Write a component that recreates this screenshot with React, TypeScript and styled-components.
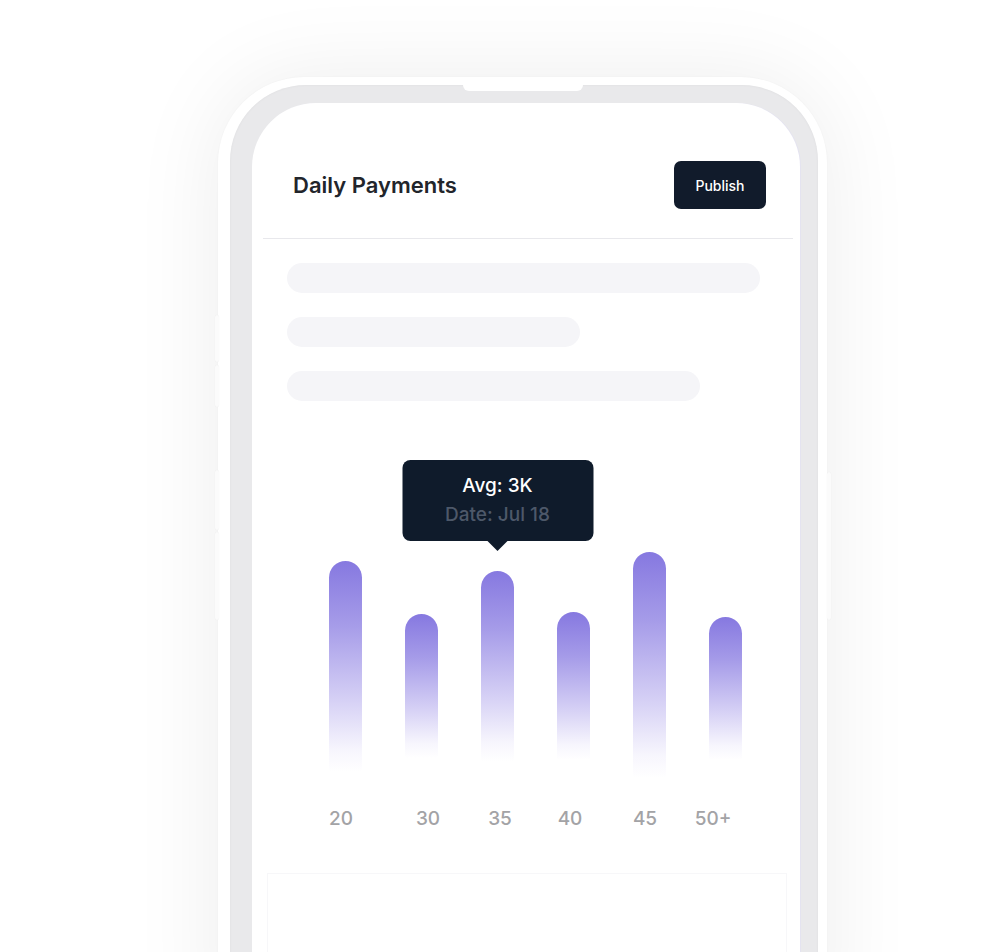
import React from "react";
import styled, { createGlobalStyle } from "styled-components";

const Global = createGlobalStyle`
  html, body { margin: 0; padding: 0; background: #ffffff; }
  body { font-family: Inter, "Noto Sans", "Liberation Sans", sans-serif; }
  * { box-sizing: border-box; }
`;

const Page = styled.div`
  width: 995px;
  height: 952px;
  overflow: hidden;
  background: #ffffff;
  padding: 77px 0 0 218px;
`;

const PhoneFrame = styled.div`
  position: relative;
  width: 609px;
  height: 1000px;
  background: #ffffff;
  border-radius: 86px;
  padding: 8px 9px 0 12px;
  box-shadow: 0 0 90px rgba(0, 0, 0, 0.075), 0 0 2px rgba(0, 0, 0, 0.04);
`;

const SideButton = styled.div<{ $top: number; $h: number; $side: "left" | "right" }>`
  position: absolute;
  top: ${(p) => p.$top}px;
  height: ${(p) => p.$h}px;
  width: 4px;
  ${(p) => (p.$side === "left" ? "left: -3px;" : "right: -4px;")}
  background: #fbfbfb;
  border-radius: 2px;
  box-shadow: 0 0 1px rgba(0, 0, 0, 0.08);
`;

const Bezel = styled.div`
  position: relative;
  height: 100%;
  background: #e9e9eb;
  border-radius: 76px;
  padding: 18px 18px 0 22px;
  box-shadow: inset 0 0 3px rgba(0, 0, 0, 0.05);
`;

const Notch = styled.div`
  position: absolute;
  top: 0;
  left: 233px;
  width: 120px;
  height: 6px;
  background: #ffffff;
  border-radius: 0 0 6px 6px;
`;

const Screen = styled.div`
  height: 100%;
  background: #ffffff;
  border-radius: 64px 64px 0 0;
  overflow: hidden;
  box-shadow: 1px 0 0 #e4e3f0;
`;

const Content = styled.div`
  margin: 0 7px 0 11px;
`;

const Header = styled.div`
  display: flex;
  align-items: center;
  justify-content: space-between;
  padding: 58px 27px 29px 30px;
  border-bottom: 1px solid #e8e8ec;
`;

const Title = styled.h1`
  margin: 0;
  font-size: 22px;
  font-weight: 600;
  color: #22252b;
`;

const PublishButton = styled.button`
  width: 92px;
  height: 48px;
  border: none;
  border-radius: 7px;
  background: #111b2b;
  color: #ffffff;
  font-family: inherit;
  font-size: 14px;
  font-weight: 500;
`;

const Skeletons = styled.div`
  display: flex;
  flex-direction: column;
  gap: 24px;
  padding: 24px 0 0 24px;
`;

const SkeletonBar = styled.div<{ $w: number }>`
  width: ${(p) => p.$w}px;
  height: 30px;
  border-radius: 15px;
  background: #f5f5f8;
`;

const Bars = styled.div`
  display: flex;
  align-items: flex-start;
  gap: 43px;
  height: 226px;
  margin: 151px 0 0 66px;
`;

const BarSlot = styled.div`
  position: relative;
  width: 33px;
  height: 100%;
`;

const Bar = styled.div<{ $top: number; $h: number }>`
  margin-top: ${(p) => p.$top}px;
  width: 33px;
  height: ${(p) => p.$h}px;
  border-radius: 17px 17px 0 0;
  background: linear-gradient(
    180deg,
    rgba(130, 116, 223, 0.97) 0%,
    rgba(140, 127, 226, 0.78) 30%,
    rgba(160, 148, 232, 0.45) 65%,
    rgba(190, 180, 240, 0.12) 90%,
    rgba(255, 255, 255, 0) 100%
  );
`;

const Tooltip = styled.div`
  position: absolute;
  left: 50%;
  bottom: calc(100% + 11px);
  transform: translateX(-50%);
  width: 191px;
  padding: 11px 0 12px;
  background: #0f1b2b;
  border-radius: 8px;
  text-align: center;
  font-size: 19px;
  line-height: 29px;
  font-weight: 500;
  &::after {
    content: "";
    position: absolute;
    left: 50%;
    top: 100%;
    transform: translateX(-50%);
    border-left: 10px solid transparent;
    border-right: 10px solid transparent;
    border-top: 10px solid #0f1b2b;
  }
`;

const TipValue = styled.div`
  color: #ffffff;
`;

const TipDate = styled.div`
  color: #4d5869;
`;

const Labels = styled.div`
  display: grid;
  grid-template-columns: 87px 72px 70px 75px 68px 60px;
  justify-items: start;
  margin-top: 29px;
  padding-left: 48px;
`;

const Label = styled.span`
  width: 60px;
  text-align: center;
  font-size: 19px;
  line-height: 24px;
  font-weight: 500;
  color: #a3a3a6;
`;

const BottomCard = styled.div`
  margin: 42px 6px 0 4px;
  height: 120px;
  border: 1px solid #f7f7f9;
  border-bottom: none;
`;

const bars = [
  { top: 9, h: 211 },
  { top: 62, h: 144 },
  { top: 19, h: 191 },
  { top: 60, h: 148 },
  { top: 0, h: 226 },
  { top: 65, h: 143 },
];

const labels = ["20", "30", "35", "40", "45", "50+"];

export default function App() {
  return (
    <>
      <Global />
      <Page>
        <PhoneFrame>
          <SideButton $side="left" $top={238} $h={47} />
          <SideButton $side="left" $top={288} $h={42} />
          <SideButton $side="left" $top={393} $h={60} />
          <SideButton $side="left" $top={455} $h={88} />
          <SideButton $side="right" $top={395} $h={148} />
          <Bezel>
            <Notch />
            <Screen>
              <Content>
                <Header>
                  <Title>Daily Payments</Title>
                  <PublishButton>Publish</PublishButton>
                </Header>
                <Skeletons>
                  <SkeletonBar $w={473} />
                  <SkeletonBar $w={293} />
                  <SkeletonBar $w={413} />
                </Skeletons>
                <Bars>
                  {bars.map((b, i) => (
                    <BarSlot key={i}>
                      {i === 2 && (
                        <Tooltip>
                          <TipValue>Avg: 3K</TipValue>
                          <TipDate>Date: Jul 18</TipDate>
                        </Tooltip>
                      )}
                      <Bar $top={b.top} $h={b.h} />
                    </BarSlot>
                  ))}
                </Bars>
                <Labels>
                  {labels.map((l) => (
                    <Label key={l}>{l}</Label>
                  ))}
                </Labels>
                <BottomCard />
              </Content>
            </Screen>
          </Bezel>
        </PhoneFrame>
      </Page>
    </>
  );
}
